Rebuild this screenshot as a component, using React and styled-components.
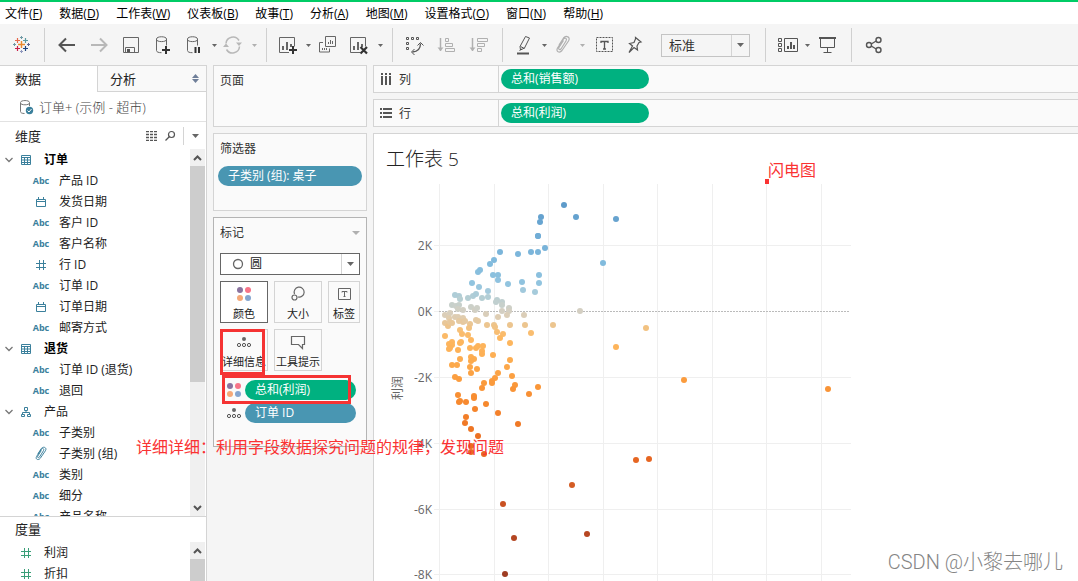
import React, { useState } from "react";
import styled, { createGlobalStyle } from "styled-components";

const GlobalStyle = createGlobalStyle`
  * {
    box-sizing: border-box;
  }

  body {
    margin: 0;
    background: #f5f5f5;
    color: #222;
    font-family: "Open Sans", "Noto Sans CJK SC", sans-serif;
    font-size: 12px;
    line-height: 18px;
  }

  button,
  select {
    margin: 0;
    padding: 0;
    border: 0;
    background: none;
    color: inherit;
    font: inherit;
  }
`;

const menus = [
  ["文件", "F"],
  ["数据", "D"],
  ["工作表", "W"],
  ["仪表板", "B"],
  ["故事", "T"],
  ["分析", "A"],
  ["地图", "M"],
  ["设置格式", "O"],
  ["窗口", "N"],
  ["帮助", "H"],
];

const dimensions = [
  { folder: true, type: "table", name: "订单", bold: true },
  { type: "text", name: "产品 ID" },
  { type: "date", name: "发货日期" },
  { type: "text", name: "客户 ID" },
  { type: "text", name: "客户名称" },
  { type: "number", name: "行 ID" },
  { type: "text", name: "订单 ID" },
  { type: "date", name: "订单日期" },
  { type: "text", name: "邮寄方式" },
  { folder: true, type: "table", name: "退货", bold: true },
  { type: "text", name: "订单 ID (退货)" },
  { type: "text", name: "退回" },
  { folder: true, type: "hierarchy", name: "产品" },
  { type: "text", name: "子类别" },
  { type: "group", name: "子类别 (组)" },
  { type: "text", name: "类别" },
  { type: "text", name: "细分" },
  { type: "text", name: "产品名称" },
];

// one [x, y] pair per order, measured from the plot's top left corner
const points = [
  [134, 25], [111, 37], [110, 42], [146, 37], [186, 39], [108, 56], [108, 56], [115, 68], [108, 72], [101, 72],
  [88, 74], [70, 72], [64, 80], [60, 84], [173, 83], [50, 90], [48, 92], [63, 95], [68, 95], [68, 100],
  [109, 95], [109, 103], [92, 102], [78, 104], [42, 103], [49, 107], [58, 111], [93, 110], [105, 112], [25, 115],
  [29, 116], [30, 119], [38, 118], [43, 116], [46, 114], [52, 118], [58, 117], [67, 120], [66, 122], [72, 122],
  [72, 125], [22, 125], [26, 126], [29, 125], [28, 129], [33, 130], [41, 127], [45, 130], [47, 128], [79, 128],
  [79, 131], [72, 131], [77, 135], [20, 133], [15, 135], [19, 138], [25, 137], [28, 137], [33, 138], [56, 134],
  [68, 137], [94, 135], [150, 131], [15, 143], [18, 146], [20, 142], [22, 143], [29, 141], [33, 142], [35, 141],
  [40, 144], [39, 148], [46, 140], [48, 141], [57, 145], [64, 145], [65, 147], [80, 145], [95, 145], [123, 145],
  [216, 148], [30, 150], [32, 154], [38, 155], [15, 156], [67, 152], [73, 154], [70, 158], [101, 153], [41, 160],
  [80, 163], [186, 167], [22, 162], [19, 164], [22, 165], [19, 169], [20, 168], [31, 162], [30, 163], [28, 170],
  [40, 168], [46, 168], [48, 166], [53, 166], [52, 171], [52, 174], [63, 175], [30, 179], [41, 177], [44, 179],
  [41, 181], [22, 185], [27, 185], [40, 187], [47, 189], [41, 193], [77, 187], [80, 180], [25, 197], [29, 199],
  [68, 193], [65, 198], [62, 201], [62, 203], [54, 203], [52, 208], [82, 196], [85, 205], [83, 209], [108, 207],
  [99, 214], [28, 215], [29, 222], [30, 221], [36, 222], [44, 216], [44, 218], [56, 224], [45, 229], [68, 233],
  [36, 237], [35, 243], [41, 249], [88, 244], [48, 256], [41, 266], [41, 272], [54, 274], [206, 280], [219, 279],
  [142, 305], [73, 324], [84, 358], [157, 354], [75, 394], [254, 200], [398, 209],
];

const scale = [
  [25, [94, 155, 202]],
  [56, [113, 173, 214]],
  [84, [130, 187, 221]],
  [104, [146, 196, 223]],
  [112, [166, 203, 219]],
  [119, [184, 207, 210]],
  [126, [202, 208, 202]],
  [132, [214, 207, 192]],
  [138, [224, 205, 175]],
  [144, [234, 198, 148]],
  [150, [246, 192, 120]],
  [158, [253, 184, 98]],
  [170, [253, 178, 88]],
  [186, [252, 168, 74]],
  [206, [250, 151, 57]],
  [226, [246, 134, 44]],
  [250, [238, 116, 36]],
  [280, [230, 102, 34]],
  [305, [212, 92, 36]],
  [326, [200, 80, 34]],
  [358, [180, 70, 34]],
  [394, [158, 60, 34]],
];

const colorAt = (y) => {
  const i = scale.findIndex(([stop]) => y <= stop);
  if (i <= 0) return `rgb(${scale[i === 0 ? 0 : scale.length - 1][1].join(",")})`;
  const [y0, a] = scale[i - 1];
  const [y1, b] = scale[i];
  const t = (y - y0) / (y1 - y0);
  return `rgb(${a.map((c, k) => Math.round(c + (b[k] - c) * t)).join(",")})`;
};

const Svg = ({ w = 24, h = 24, children, color = "#555", ...rest }) => (
  <svg width={w} height={h} viewBox={`0 0 ${w} ${h}`} fill="none" stroke={color} aria-hidden="true" {...rest}>
    {children}
  </svg>
);

const Triangle = ({ color = "#666", w = 5, h = 3 }) => (
  <svg width={w} height={h} viewBox={`0 0 ${w} ${h}`} aria-hidden="true">
    <path d={`M0 0h${w}L${w / 2} ${h}z`} fill={color} />
  </svg>
);

const plus = (x, y, r) => `M${x - r} ${y}h${r * 2}M${x} ${y - r}v${r * 2}`;

const LogoIcon = () => (
  <Svg>
    <path d={plus(11.5, 11.5, 3.5)} stroke="#eb8a2d" strokeWidth="1.400" />
    <path d={plus(7.5, 7.5, 2.5)} stroke="#e5694b" strokeWidth="1.200" />
    <path d={plus(15.5, 7.5, 2.5)} stroke="#5b9aa0" strokeWidth="1.200" />
    <path d={plus(7.5, 15.5, 2.5)} stroke="#c9214a" strokeWidth="1.200" />
    <path d={plus(15.5, 15.5, 2.5)} stroke="#1f447e" strokeWidth="1.200" />
    <path d={plus(11.5, 4.5, 1.5)} stroke="#7099a5" />
    <path d={plus(11.5, 18.5, 1.5)} stroke="#8f97bd" />
    <path d={plus(4.5, 11.5, 1.5)} stroke="#7099a5" />
    <path d={plus(18.5, 11.5, 1.5)} stroke="#5c6692" />
  </Svg>
);

const ArrowIcon = ({ forward }) => (
  <Svg color={forward ? "#b8b8b8" : "#555"} strokeWidth="2">
    <path d={forward ? "M4 12h15M13 5.500l6.500 6.500l-6.500 6.500" : "M20 12h-15M11 5.500l-6.500 6.500l6.500 6.500"} />
  </Svg>
);

const SaveIcon = () => (
  <Svg color="#666">
    <path d="M4.500 4.500h15v15h-15zM6.500 19v-4.500h9v4.500" />
    <path d="M8 16h3v3h-3z" fill="#555" stroke="none" />
  </Svg>
);

const DataIcon = ({ pause }) => (
  <Svg color="#666">
    <path d="M15.500 12.500v-6.500c0-3-10-3-10 0v11.500c0 1.500 2 2.200 5 2.200M5.500 6.500c0 2.800 10 2.800 10 0" />
    {pause ? (
      <path d="M13.500 14v6M17 14v6" stroke="#333" strokeWidth="2" />
    ) : (
      <path d={plus(15, 17, 4)} stroke="#333" strokeWidth="2" />
    )}
  </Svg>
);

const RefreshIcon = () => (
  <Svg color="#b8b8b8">
    <path d="M4 10.500a7 7 0 0 1 13-3M17.500 13.500a7 7 0 0 1-13 3" strokeWidth="1.500" />
    <path d="M14 9.500h6l-3 3.500zM1 14h6l-3-3.500z" fill="#b8b8b8" stroke="none" />
  </Svg>
);

const SheetIcon = ({ clear }) => (
  <Svg color="#666">
    <path d="M13 19.500h-9.500v-15h15v9" />
    <path d="M7 17v-4M11 17v-8M15 14v-3" strokeWidth="2" />
    {clear ? (
      <path d="M13.500 14l6.500 6.500M20 14l-6.500 6.500" stroke="#333" strokeWidth="2.200" />
    ) : (
      <path d={plus(17, 17, 4)} stroke="#333" strokeWidth="2" />
    )}
  </Svg>
);

const DuplicateIcon = () => (
  <Svg color="#666">
    <path d="M9.500 3.500h10v10h-10zM7 9.500h-3.500v9.500h10v-3.500" />
    <path d="M12.500 11v-2M14.500 11v-4M16.500 11v-3M6.500 17v-2M8.500 17v-2M10.500 17v-2" />
  </Svg>
);

const SwapIcon = () => (
  <Svg>
    <path d="M3.500 4.500h2v2h-2zM8.500 4.500h2v2h-2zM13.500 4.500h2v2h-2zM3.500 9.500h2v2h-2zM3.500 14.500h2v2h-2z" />
    <path d="M17.500 10.500c0 5-2 8-8 8.500" strokeWidth="1.300" />
    <path d="M14.500 12.500l3-3l3 3M11.500 16l-3 3l3 3" />
  </Svg>
);

const SortIcon = ({ desc }) => (
  <Svg color="#b0b0b0">
    <path d="M5.500 5v13" strokeWidth="1.500" />
    <path d="M2.500 14.500h6l-3 3.500z" fill="#b0b0b0" stroke="none" />
    {desc ? (
      <path d="M10.500 5.500h10v3h-10zM10.500 10.500h7v3h-7zM10.500 15.500h4v3h-4z" />
    ) : (
      <path d="M10.500 5.500h3v3h-3zM10.500 10.500h7v3h-7zM10.500 15.500h9v3h-9z" />
    )}
  </Svg>
);

const HighlightIcon = () => (
  <Svg>
    <path d="M13.500 3.500l4 1.500l-5 10l-4 2l-.500-3.500zM8.500 13.500l4 2M9.500 16l-2 1.500" />
    <path d="M5 20.500h12" strokeWidth="2" />
  </Svg>
);

const ClipIcon = ({ color = "#b0b0b0", small }) => (
  <svg
    width={small ? 16 : 24}
    height={small ? 16 : 24}
    viewBox={small ? "2 2 20 20" : "0 0 24 24"}
    fill="none"
    stroke={color}
    strokeWidth="1.200"
    aria-hidden="true"
  >
    <path d="M10 16l5-8c1.500-2.500-1-4-2.500-2l-6 9c-2 3.500 2 5.500 4.500 2.500l6.500-9.500c2.500-4-2.500-6-5-3l-4.500 7M10 16c-1.500 1.500-3 0-2-1.500l4.500-7" />
  </svg>
);

const TextIcon = () => (
  <Svg>
    <rect x="4.500" y="4.500" width="16" height="14" strokeDasharray="2 1" />
    <path d="M9 10v-1.500h7v1.500M12.500 8.500v7.500M11 16h3" strokeWidth="1.300" />
  </Svg>
);

const PinIcon = () => (
  <Svg>
    <path
      d="M12.500 4.500l5.500 4.500l-2 .500l-2 3.500l.500 4l-3.500-2.500l-5 5l3.500-6.500l-3-2.500l4.500-1l1.500-3.500z"
      strokeWidth="1.200"
    />
  </Svg>
);

const ShowMeIcon = () => (
  <Svg w={26}>
    <path d="M4.500 5.500h3v3h-3zM4.500 10.500h3v3h-3zM4.500 15.500h3v3h-3zM10.500 5.500h13v13h-13z" />
    <path d="M14 16v-3M17 16v-7M20 16v-4" strokeWidth="2" />
  </Svg>
);

const PresentIcon = () => (
  <Svg>
    <path d="M3 5h17" strokeWidth="2" />
    <path d="M4.500 5v9.500h14v-9.500M11.500 14.500v5M7.500 19.500h8" />
  </Svg>
);

const ShareIcon = () => (
  <Svg strokeWidth="1.400">
    <circle cx="7" cy="12" r="2.500" />
    <circle cx="16.500" cy="7" r="2.500" />
    <circle cx="16.500" cy="17" r="2.500" />
    <path d="M9.200 11l5-3M9.200 13l5 3" />
  </Svg>
);

const FieldIcon = ({ type, color = "#3b809c" }) => {
  if (type === "text") return <Abc>Abc</Abc>;
  if (type === "group") return <ClipIcon color={color} small />;
  const shapes = {
    table: "M1.500 1.500h9v9h-9zM1.500 3.500h9M1.500 6h9M1.500 8.500h9M4.500 3.500v7M7.500 3.500v7",
    date: "M1.500 3.500h9v7h-9zM1.500 5.500h9M3.500 1v2.500M8.500 1v2.500",
    number: "M4.500 1v10M8.500 1v10M1 4.500h10M1 8.500h10",
    hierarchy: "M4.500 1.500h3v3h-3zM1.500 8.500h3v2h-3zM7.500 8.500h3v2h-3zM6 4.500v2M2.500 8.500v-2h7v2",
  };
  return (
    <Svg w={12} h={12} color={color}>
      <path d={shapes[type]} />
    </Svg>
  );
};

const ColorIcon = () => (
  <Svg w={16} h={16} stroke="none">
    <circle cx="4" cy="4" r="3" fill="#8a739f" />
    <circle cx="12" cy="4" r="3" fill="#f77488" />
    <circle cx="4" cy="12" r="3" fill="#f5a878" />
    <circle cx="12" cy="12" r="3" fill="#85a5cf" />
  </Svg>
);

const DetailIcon = () => (
  <Svg w={16} h={16}>
    <circle cx="8" cy="5" r="2" fill="#666" stroke="none" />
    <circle cx="3" cy="11" r="1.600" />
    <circle cx="8" cy="11" r="1.600" />
    <circle cx="13" cy="11" r="1.600" />
  </Svg>
);

const SizeIcon = () => (
  <Svg w={16} h={16} color="#666">
    <path d="M4.500 8a5 5 0 1 1 3.500 3" strokeWidth="1.200" />
    <circle cx="4.500" cy="11.500" r="2.500" strokeWidth="1.200" />
  </Svg>
);

const LabelIcon = () => (
  <Svg w={16} h={16} color="#666">
    <path d="M2.500 2.500h12v11h-12zM6 6.500v-1h5v1M8.500 5.500v5M7.500 10.500h2" />
  </Svg>
);

const TooltipIcon = () => (
  <Svg w={16} h={16} color="#666">
    <path d="M1.500 2.500h13v8h-2v4l-4-4h-7z" strokeWidth="1.200" />
  </Svg>
);

const Scroll = ({ end }) => (
  <ScrollTrack>
    <ScrollButton aria-label="向上滚动">
      <Svg w={9} h={6} strokeWidth="2">
        <path d="M1 5l3.500-3.500l3.500 3.500" />
      </Svg>
    </ScrollButton>
    <ScrollThumb $partial={end} />
    {end && (
      <>
        <ScrollRest />
        <ScrollButton aria-label="向下滚动">
          <Svg w={9} h={6} strokeWidth="2">
            <path d="M1 1l3.500 3.500l3.500-3.500" />
          </Svg>
        </ScrollButton>
      </>
    )}
  </ScrollTrack>
);

const ToolItem = ({ label, w, children }) => (
  <Tool $w={w} aria-label={label}>
    {children}
  </Tool>
);

const Drop = ({ label, off }) => (
  <Caret aria-label={label}>
    <Triangle color={off ? "#b0b0b0" : "#666"} />
  </Caret>
);

const Toolbar = () => (
  <ToolRow>
    <ToolGroup>
      <ToolItem label="开始" w={31}><LogoIcon /></ToolItem>
    </ToolGroup>
    <ToolGroup>
      <ToolItem label="后退"><ArrowIcon /></ToolItem>
      <ToolItem label="前进"><ArrowIcon forward /></ToolItem>
      <ToolItem label="保存"><SaveIcon /></ToolItem>
      <ToolItem label="新建数据源"><DataIcon /></ToolItem>
      <ToolItem label="暂停更新" w={30}><DataIcon pause /></ToolItem>
      <Drop label="更新选项" />
      <ToolItem label="运行更新" w={30}><RefreshIcon /></ToolItem>
      <Drop label="运行选项" off />
    </ToolGroup>
    <ToolGroup>
      <ToolItem label="新建工作表" w={30}><SheetIcon /></ToolItem>
      <Drop label="新建选项" />
      <ToolItem label="复制" w={30}><DuplicateIcon /></ToolItem>
      <ToolItem label="清除"><SheetIcon clear /></ToolItem>
      <Drop label="清除选项" />
    </ToolGroup>
    <ToolGroup>
      <ToolItem label="交换行和列"><SwapIcon /></ToolItem>
      <ToolItem label="升序"><SortIcon /></ToolItem>
      <ToolItem label="降序"><SortIcon desc /></ToolItem>
    </ToolGroup>
    <ToolGroup>
      <ToolItem label="突出显示" w={30}><HighlightIcon /></ToolItem>
      <Drop label="突出显示选项" />
      <ToolItem label="组成员" w={28}><ClipIcon /></ToolItem>
      <Drop label="组选项" off />
      <ToolItem label="显示标签" w={34}><TextIcon /></ToolItem>
      <ToolItem label="固定轴" w={28}><PinIcon /></ToolItem>
      <FitBox>
        <PlainSelect aria-label="适合" defaultValue="标准">
          <option>标准</option>
          <option>整个视图</option>
        </PlainSelect>
        <SelectArrow><Triangle w={7} h={4} /></SelectArrow>
      </FitBox>
    </ToolGroup>
    <ToolGroup>
      <ToolItem label="显示卡" w={30}><ShowMeIcon /></ToolItem>
      <Drop label="显示卡选项" />
      <ToolItem label="演示模式"><PresentIcon /></ToolItem>
    </ToolGroup>
    <ToolGroup $last>
      <ToolItem label="共享"><ShareIcon /></ToolItem>
    </ToolGroup>
  </ToolRow>
);

const DataPane = () => (
  <Sidebar>
    <Tabs>
      <Tab $active>数据</Tab>
      <Tab>
        分析
        <svg width="7" height="9" viewBox="0 0 7 9" aria-hidden="true">
          <path d="M0 4l3.500-4l3.500 4zM0 5l3.500 4l3.500-4z" fill="#6f7f99" />
        </svg>
      </Tab>
    </Tabs>
    <Source>
      <Svg w={16} h={16} color="#777">
        <path d="M10.500 7v-3.500c0-2.600-9-2.600-9 0v9c0 1.300 1.500 2 4 2M1.500 4c0 2.400 9 2.400 9 0" />
        <circle cx="10.500" cy="11.500" r="3.700" fill="#3b809c" stroke="none" />
        <path d="M8.500 11.500l1.500 1.500l2.500-3" stroke="#fff" />
      </Svg>
      订单+ (示例 - 超市)
    </Source>
    <PaneHead>
      <h2>维度</h2>
      <HeadButton aria-label="查看数据">
        <Svg w={12} h={10}>
          <path d="M0 .500h12M0 3.500h12M0 6.500h12M0 9.500h12" strokeDasharray="3 1" strokeWidth="1.400" />
        </Svg>
      </HeadButton>
      <HeadButton aria-label="查找字段">
        <Svg w={11} h={11} strokeWidth="1.200">
          <circle cx="6.500" cy="4.500" r="3" />
          <path d="M4.500 6.500l-4 4" />
        </Svg>
      </HeadButton>
      <HeadMenu aria-label="维度菜单"><Triangle w={7} h={4} /></HeadMenu>
    </PaneHead>
    <FieldArea $grow>
      <FieldList>
        {dimensions.map((f) => (
          <Field key={f.name} $folder={f.folder} $bold={f.bold}>
            {f.folder && (
              <Svg w={8} h={6} color="#777" strokeWidth="1.300">
                <path d="M.500 1l3.500 3.500l3.500-3.500" />
              </Svg>
            )}
            <IconCell $folder={f.folder}><FieldIcon type={f.type} /></IconCell>
            {f.name}
          </Field>
        ))}
      </FieldList>
      <Scroll end />
    </FieldArea>
    <Measures>
      <h2>度量</h2>
      <FieldArea>
        <FieldList>
          {["利润", "折扣"].map((name) => (
            <Field key={name} $measure>
              <IconCell $folder><FieldIcon type="number" color="#3a9e78" /></IconCell>
              {name}
            </Field>
          ))}
        </FieldList>
        <Scroll />
      </FieldArea>
    </Measures>
  </Sidebar>
);

const Cards = () => {
  const [mark, setMark] = useState("圆");

  return (
    <CardColumn>
      <Card $h={62}>
        <CardTitle>页面</CardTitle>
      </Card>
      <Card $h={78}>
        <CardTitle>筛选器</CardTitle>
        <FilterPill>子类别 (组): 桌子</FilterPill>
      </Card>
      <Card $h={230} $strong>
        <CardTitle>
          标记
          <Triangle color="#b0b0b0" w={8} h={4} />
        </CardTitle>
        <MarkBox>
          <Svg w={12} h={12} color="#666">
            <circle cx="6" cy="6" r="4.500" strokeWidth="1.300" />
          </Svg>
          <PlainSelect aria-label="标记类型" value={mark} onChange={(e) => setMark(e.target.value)}>
            <option>圆</option>
            <option>方形</option>
          </PlainSelect>
          <SelectArrow><Triangle w={7} h={4} /></SelectArrow>
        </MarkBox>
        <MarkGrid>
          <MarkButton $active><ColorIcon /><span>颜色</span></MarkButton>
          <MarkButton><SizeIcon /><span>大小</span></MarkButton>
          <MarkButton><LabelIcon /><span>标签</span></MarkButton>
          <MarkButton><DetailIcon /><span>详细信息</span></MarkButton>
          <MarkButton><TooltipIcon /><span>工具提示</span></MarkButton>
        </MarkGrid>
        <Encodings>
          <Encoding><ColorIcon /><Pill $green>总和(利润)</Pill></Encoding>
          <Encoding><DetailIcon /><Pill>订单 ID</Pill></Encoding>
        </Encodings>
      </Card>
    </CardColumn>
  );
};

const columns = [9, 64, 118, 173, 227, 282, 336, 391];
const rows = [[65, "2K"], [131, "0K"], [197, "-2K"], [263, "-4K"], [329, "-6K"], [394, "-8K"]];

const ScatterPlot = () => (
  <Plot width="466" height="401" viewBox="0 0 466 401" role="img" aria-label="利润散点图">
    <g transform="translate(44 0)">
      {columns.map((x) => (
        <path key={x} d={`M${x + 0.5} 4v397`} stroke="#efefef" />
      ))}
      {rows.map(([y, label]) => (
        <g key={label}>
          <path d={`M4 ${y + 0.5}H${label === "0K" ? 9 : 421}`} stroke="#efefef" />
          <text x="2" y={y + 5} textAnchor="end">{label}</text>
        </g>
      ))}
      <path d="M9 131.500H419" stroke="#bbb" strokeDasharray="2 1" />
      {points.map(([x, y], i) => (
        <circle key={i} cx={x} cy={y} r="3" fill={colorAt(y)} />
      ))}
    </g>
    <text transform="translate(16 208) rotate(-90)" textAnchor="middle">利润</text>
  </Plot>
);

const Worksheet = () => (
  <Main>
    <Shelf>
      <ShelfName>
        <Svg w={12} h={12} stroke="none">
          <path d="M1 0h2v2h-2zM1 3h2v9h-2zM5 0h2v2h-2zM5 3h2v9h-2zM9 0h2v2h-2zM9 3h2v9h-2z" fill="#555" />
        </Svg>
        <span>列</span>
      </ShelfName>
      <ShelfPill $green>总和(销售额)</ShelfPill>
    </Shelf>
    <Shelf>
      <ShelfName>
        <Svg w={12} h={12} stroke="none">
          <path d="M0 1h2v2h-2zM3 1h9v2h-9zM0 5h2v2h-2zM3 5h9v2h-9zM0 9h2v2h-2zM3 9h9v2h-9z" fill="#555" />
        </Svg>
        <span>行</span>
      </ShelfName>
      <ShelfPill $green>总和(利润)</ShelfPill>
    </Shelf>
    <Sheet>
      <h1>工作表 5</h1>
      <ScatterPlot />
    </Sheet>
  </Main>
);

export default function App() {
  return (
    <Page>
      <GlobalStyle />
      <MenuBar>
        {menus.map(([name, key]) => (
          <button key={key}>
            {name}(<u>{key}</u>)
          </button>
        ))}
      </MenuBar>
      <Toolbar />
      <Workspace>
        <DataPane />
        <Cards />
        <Worksheet />
      </Workspace>

      <Frame style={{ left: 220, top: 327, width: 45, height: 46 }} />
      <Frame style={{ left: 222, top: 373, width: 129, height: 29 }} />
      <Note style={{ left: 136, top: 432 }}>详细详细：利用字段数据探究问题的规律，发现问题</Note>
      <Note style={{ left: 768, top: 155 }}>闪电图</Note>
      <Handle />
      <Watermark>CSDN @小黎去哪儿</Watermark>
    </Page>
  );
}

const Page = styled.div`
  position: relative;
  display: flex;
  flex-direction: column;
  height: 100vh;
  overflow: hidden;
  border-top: 2px solid #00cc66;
`;

const MenuBar = styled.nav`
  display: flex;
  flex: none;
  gap: 17px;
  height: 22px;
  padding: 2px 5px 0;
  background: #fff;
  color: #000;

  button {
    white-space: nowrap;
  }

  u {
    text-underline-offset: 1px;
  }
`;

const ToolRow = styled.div`
  display: flex;
  flex: none;
  height: 41px;
  padding: 4px 0 3px;
`;

const ToolGroup = styled.div`
  display: flex;
  align-items: center;
  padding: 0 7px 0 6px;
  border-right: ${(p) => (p.$last ? "0" : "1px solid #d0d0d0")};
`;

const Tool = styled.button`
  display: flex;
  align-items: center;
  justify-content: center;
  width: ${(p) => p.$w || 32}px;
  height: 32px;

  &:hover {
    background: #e6e6e6;
  }
`;

const Caret = styled.button`
  display: flex;
  align-items: center;
  justify-content: center;
  width: 10px;
  height: 32px;
`;

const PlainSelect = styled.select`
  flex: 1;
  min-width: 0;
  height: 100%;
  appearance: none;
  outline: 0;
`;

const SelectArrow = styled.span`
  display: flex;
  align-items: center;
  justify-content: center;
  width: 18px;
  height: 100%;
  border-left: 1px solid #d4d4d4;
  pointer-events: none;
`;

const FitBox = styled.div`
  display: flex;
  align-items: center;
  width: 89px;
  height: 23px;
  margin: 0 8px 0 12px;
  padding-left: 7px;
  border: 1px solid #c4c4c4;
  color: #333;
  font-size: 13px;
`;

const Workspace = styled.div`
  display: grid;
  grid-template-columns: 207px 154px 1fr;
  column-gap: 6px;
  flex: 1;
  min-height: 0;
`;

const Sidebar = styled.aside`
  display: flex;
  flex-direction: column;
  min-height: 0;
  border: 1px solid #d4d4d4;
  border-width: 1px 1px 0 0;
  background: #fff;

  h2 {
    flex: 1;
    margin: 0;
    font-size: 13px;
    font-weight: 400;
  }
`;

const Tabs = styled.div`
  display: flex;
  height: 26px;
`;

const Tab = styled.button`
  display: flex;
  align-items: center;
  justify-content: space-between;
  width: ${(p) => (p.$active ? "97px" : "auto")};
  flex: ${(p) => (p.$active ? "none" : 1)};
  padding: ${(p) => (p.$active ? "0 15px" : "0 7px 0 12px")};
  border: solid #d4d4d4;
  border-width: ${(p) => (p.$active ? "0" : "0 0 1px 1px")};
  background: ${(p) => (p.$active ? "#fff" : "#f9f9f9")};
  font-size: 13px;
`;

const Source = styled.div`
  display: flex;
  align-items: center;
  gap: 4px;
  flex: none;
  height: 30px;
  padding-left: 19px;
  border-bottom: 1px solid #e2e2e2;
  color: #444;
  font-size: 13px;
  font-weight: 300;
`;

const PaneHead = styled.div`
  display: flex;
  align-items: center;
  flex: none;
  height: 27px;
  padding-left: 15px;
`;

const HeadButton = styled.button`
  display: flex;
  align-items: center;
  justify-content: center;
  width: 19px;
  height: 18px;
`;

const HeadMenu = styled(HeadButton)`
  width: 23px;
  margin-left: 3px;
  border-left: 1px solid #d4d4d4;
`;

const FieldArea = styled.div`
  display: flex;
  flex: ${(p) => (p.$grow ? 1 : "none")};
  min-height: 0;
  padding-right: 1px;
  overflow: hidden;
`;

const FieldList = styled.ul`
  flex: 1;
  margin: 0;
  padding: 0;
  list-style: none;
`;

const Field = styled.li`
  display: flex;
  align-items: center;
  height: 21px;
  padding-left: ${(p) => (p.$measure ? 17 : p.$folder ? 5 : 29)}px;
  font-weight: ${(p) => (p.$bold ? 700 : 400)};
  color: ${(p) => (p.$bold ? "#000" : "#222")};
  white-space: nowrap;
`;

const IconCell = styled.span`
  display: flex;
  align-items: center;
  justify-content: center;
  flex: none;
  width: ${(p) => (p.$folder ? 18 : 24)}px;
  margin-right: ${(p) => (p.$folder ? 9 : 6)}px;

  svg + & {
    margin-left: 4px;
  }
`;

const Abc = styled.span`
  color: #3b809c;
  font-size: 9px;
  font-weight: 700;
`;

const ScrollTrack = styled.div`
  display: flex;
  flex-direction: column;
  width: 15px;
  background: #f0f0f0;
`;

const ScrollButton = styled.button`
  display: flex;
  align-items: center;
  justify-content: center;
  flex: none;
  height: 17px;
`;

const ScrollThumb = styled.div`
  flex: ${(p) => (p.$partial ? 65 : 1)};
  background: #cdcdcd;
`;

const ScrollRest = styled.div`
  flex: 35;
`;

const Measures = styled.section`
  flex: none;
  height: 65px;
  border-top: 1px solid #d4d4d4;
  overflow: hidden;

  h2 {
    padding: 3px 15px 4px;
  }
`;

const CardColumn = styled.section`
  display: flex;
  flex-direction: column;
  gap: 6px;
`;

const Card = styled.div`
  min-height: ${(p) => p.$h}px;
  padding: 6px 4px;
  border: 1px solid ${(p) => (p.$strong ? "#b4b4b4" : "#d4d4d4")};
  background: #fafafa;
`;

const CardTitle = styled.div`
  display: flex;
  align-items: center;
  justify-content: space-between;
  height: 18px;
  padding: 0 2px;
  color: #333;
`;

const Pill = styled.button`
  height: 20px;
  padding: 0 10px;
  border-radius: 10px;
  background: ${(p) => (p.$green ? "#00b180" : "#4996b2")};
  color: #fff;
  text-align: left;
  white-space: nowrap;
`;

const FilterPill = styled(Pill)`
  width: 100%;
  margin-top: 8px;
`;

const MarkBox = styled.div`
  display: flex;
  align-items: center;
  gap: 6px;
  height: 22px;
  margin: 11px 2px 0;
  padding-left: 11px;
  border: 1px solid #666;
  background: #fff;
`;

const MarkGrid = styled.div`
  display: grid;
  grid-template-columns: 48px 48px 32px;
  gap: 6px;
  margin: 6px 2px 0;
`;

const MarkButton = styled.button`
  display: flex;
  flex-direction: column;
  align-items: center;
  justify-content: space-between;
  height: 42px;
  padding: 4px 0 0;
  border: 1px solid ${(p) => (p.$active ? "#666" : "#d4d4d4")};
  background: ${(p) => (p.$active ? "#fff" : "#fafafa")};
  font-size: 11px;
  line-height: 16px;
  white-space: nowrap;
`;

const Encodings = styled.div`
  display: flex;
  flex-direction: column;
  gap: 3px;
  margin: 9px 6px 0 8px;
`;

const Encoding = styled.div`
  display: flex;
  align-items: center;
  gap: 3px;

  ${Pill} {
    flex: 1;
  }
`;

const Main = styled.main`
  display: flex;
  flex-direction: column;
  gap: 6px;
  min-width: 0;
  min-height: 0;
`;

const Shelf = styled.div`
  display: flex;
  align-items: center;
  flex: none;
  height: 28px;
  border: 1px solid #d4d4d4;
  border-right: 0;
  background: #fafafa;
`;

const ShelfName = styled.div`
  display: flex;
  align-items: center;
  gap: 7px;
  width: 125px;
  height: 100%;
  padding-left: 6px;
  border-right: 1px solid #d4d4d4;
  color: #333;

  span {
    padding-top: 2px;
  }
`;

const ShelfPill = styled(Pill)`
  width: 148px;
  margin-left: 2px;
`;

const Sheet = styled.section`
  display: flex;
  flex-direction: column;
  flex: 1;
  min-height: 0;
  padding: 10px 0 0 12px;
  border: solid #d4d4d4;
  border-width: 1px 0 0 1px;
  background: #fff;
  overflow: hidden;

  h1 {
    margin: 0 0 6px;
    color: #222;
    font-size: 19px;
    font-weight: 300;
    line-height: 30px;
  }
`;

const Plot = styled.svg`
  flex: none;

  text {
    fill: #666;
    font-size: 12px;
  }
`;

const Frame = styled.div`
  position: absolute;
  border: 3px solid #f53333;
  pointer-events: none;
`;

const Note = styled.div`
  position: absolute;
  color: #fa3232;
  font-family: "Noto Sans CJK SC", sans-serif;
  font-size: 16px;
  line-height: 24px;
  white-space: nowrap;
`;

const Handle = styled.div`
  position: absolute;
  left: 765px;
  top: 177px;
  width: 4px;
  height: 5px;
  background: #fa3232;
`;

const Watermark = styled.div`
  position: absolute;
  right: 15px;
  bottom: 4px;
  color: #858585;
  font-family: Roboto, "Noto Sans CJK SC", sans-serif;
  font-size: 20px;
  font-weight: 300;
  line-height: 30px;
`;
